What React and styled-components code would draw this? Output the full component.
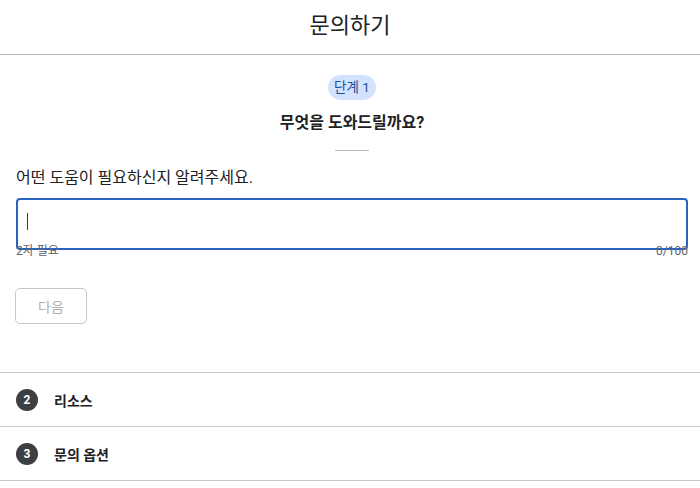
import React from 'react';
import styled, { createGlobalStyle } from 'styled-components';

const GlobalStyle = createGlobalStyle`
  html, body {
    margin: 0;
    padding: 0;
    background: #fff;
  }
  body {
    font-family: Roboto, "Noto Sans CJK KR", "Noto Sans", sans-serif;
    color: #202124;
  }
`;

const Page = styled.div`
  width: 700px;
  min-height: 488px;
  display: flex;
  flex-direction: column;
`;

const Header = styled.header`
  height: 54px;
  border-bottom: 1px solid #b4b4b4;
  display: flex;
  align-items: center;
  justify-content: center;
`;

const HeaderTitle = styled.h1`
  margin: 0 0 8px;
  font-size: 22px;
  font-weight: 400;
  color: #202124;
`;

const StepBody = styled.section`
  padding: 20px 12px 0 16px;
  display: flex;
  flex-direction: column;
`;

const StepIntro = styled.div`
  display: flex;
  flex-direction: column;
  align-items: center;
`;

const StepBadge = styled.span`
  height: 25px;
  padding: 0 6px;
  border-radius: 13px;
  background: #d3e3fd;
  color: #1d4f9c;
  font-size: 13.5px;
  line-height: 25px;
`;

const StepTitle = styled.h2`
  margin: 13px 0 0;
  font-size: 16px;
  font-weight: 700;
  line-height: 20px;
`;

const ShortRule = styled.hr`
  width: 34px;
  margin: 17px 0 0;
  border: 0;
  border-top: 1px solid #bdbdbd;
`;

const FieldLabel = styled.label`
  margin-top: 17px;
  font-size: 16px;
  line-height: 20px;
`;

const TextField = styled.div`
  margin-top: 10px;
  border: 2px solid #2b63c3;
  border-radius: 4px;
  padding: 12px 9px;
  height: 24px;
`;

const Caret = styled.span`
  display: block;
  width: 1px;
  height: 17px;
  margin-top: 1px;
  background: #1a3f8a;
`;

const FieldHelp = styled.div`
  margin-top: -6px;
  display: flex;
  justify-content: space-between;
  font-size: 12px;
  line-height: 14px;
  color: #5f6368;
`;

const NextButton = styled.button`
  margin-top: 30px;
  margin-left: -1px;
  width: 72px;
  height: 36px;
  border: 1px solid #c6c6c6;
  border-radius: 5px;
  background: #fff;
  color: #b0b0b0;
  font-family: inherit;
  font-size: 14px;
`;

const StepList = styled.ol`
  list-style: none;
  margin: 48px 0 0;
  padding: 0;
  border-top: 1px solid #c8c8c8;
`;

const StepRow = styled.li`
  height: 53px;
  border-bottom: 1px solid #c8c8c8;
  display: flex;
  align-items: center;
  gap: 16px;
  padding-left: 16px;
`;

const StepNumber = styled.span`
  width: 22px;
  height: 22px;
  border-radius: 50%;
  background: #3c4043;
  color: #fff;
  font-size: 12px;
  font-weight: 700;
  display: flex;
  align-items: center;
  justify-content: center;
`;

const StepName = styled.span`
  font-size: 14px;
  font-weight: 700;
`;

const steps = [
  { n: 2, name: '리소스' },
  { n: 3, name: '문의 옵션' },
];

export default function App() {
  return (
    <Page>
      <GlobalStyle />
      <Header>
        <HeaderTitle>문의하기</HeaderTitle>
      </Header>
      <StepBody>
        <StepIntro>
          <StepBadge>단계 1</StepBadge>
          <StepTitle>무엇을 도와드릴까요?</StepTitle>
          <ShortRule />
        </StepIntro>
        <FieldLabel>어떤 도움이 필요하신지 알려주세요.</FieldLabel>
        <TextField>
          <Caret />
        </TextField>
        <FieldHelp>
          <span>2자 필요</span>
          <span>0/100</span>
        </FieldHelp>
        <div>
          <NextButton disabled>다음</NextButton>
        </div>
      </StepBody>
      <StepList>
        {steps.map((s) => (
          <StepRow key={s.n}>
            <StepNumber>{s.n}</StepNumber>
            <StepName>{s.name}</StepName>
          </StepRow>
        ))}
      </StepList>
    </Page>
  );
}
